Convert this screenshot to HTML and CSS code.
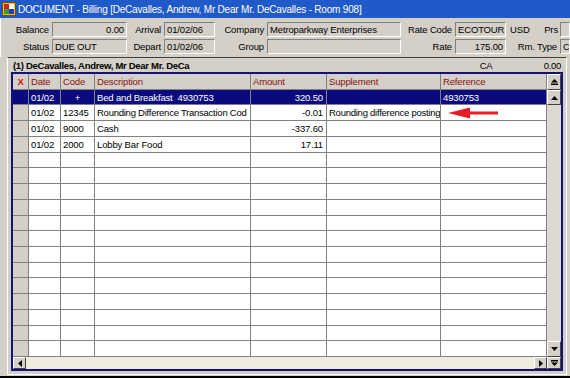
FILE: index.html
```html
<!DOCTYPE html>
<html lang="en">
<head>
  <meta charset="UTF-8">
  <title>DOCUMENT - Billing</title>
  <link rel="stylesheet" href="styles.css">
</head>
<body>
<div class="window">
  <div class="titlebar">
    <svg class="app-icon" width="14" height="14" viewBox="0 0 14 14">
      <rect x="0.5" y="0.5" width="13" height="13" fill="#f4c020" stroke="#7a4a00"/>
      <rect x="2" y="2" width="5" height="5" fill="#d42020"/>
      <rect x="7" y="7" width="5" height="5" fill="#2040c0"/>
      <rect x="7" y="2" width="5" height="5" fill="#fff"/>
      <rect x="2" y="7" width="5" height="5" fill="#30a030"/>
    </svg>
    <span class="title">DOCUMENT - Billing [DeCavalles, Andrew, Mr Dear Mr. DeCavalles - Room 908]</span>
  </div>

  <div class="summary">
    <label>Balance</label><div class="field num">0.00</div>
    <label>Arrival</label><div class="field">01/02/06</div>
    <label>Company</label><div class="field">Metroparkway Enterprises</div>
    <label>Rate Code</label><div class="field">ECOTOUR</div>
    <div class="pair"><span>USD</span><span>Prs</span></div><div class="field"></div>

    <label>Status</label><div class="field">DUE OUT</div>
    <label>Depart</label><div class="field">01/02/06</div>
    <label>Group</label><div class="field"></div>
    <label>Rate</label><div class="field num">175.00</div>
    <label>Rm. Type</label><div class="field">C</div>
  </div>

  <div class="panel">
    <div class="panel-head">
      <span class="guest">(1) DeCavalles, Andrew, Mr Dear Mr. DeCa</span>
      <span class="cur">CA</span>
      <span class="bal">0.00</span>
    </div>
    <div class="grid-box">
      <div class="grid-main">
        <div class="postings" id="postings">
          <div class="hd x">X</div><div class="hd">Date</div><div class="hd">Code</div><div class="hd">Description</div><div class="hd">Amount</div><div class="hd">Supplement</div><div class="hd">Reference</div>

          <div class="rh sel"></div><div class="sel">01/02</div><div class="sel center">+</div><div class="sel">Bed and Breakfast&nbsp; 4930753</div><div class="sel num">320.50</div><div class="sel"></div><div class="sel">4930753</div>

          <div class="rh"></div><div>01/02</div><div>12345</div><div class="tight">Rounding Difference Transaction Cod</div><div class="num">-0.01</div><div class="tight">Rounding difference posting</div><div></div>

          <div class="rh"></div><div>01/02</div><div>9000</div><div>Cash</div><div class="num">-337.60</div><div></div><div></div>

          <div class="rh"></div><div>01/02</div><div>2000</div><div>Lobby Bar Food</div><div class="num">17.11</div><div></div><div></div>
        </div>
        <div class="vscroll">
          <div class="sbtn"><svg width="7" height="6" viewBox="0 0 7 6"><path d="M3.5 0L7 3.5H0z" fill="#000"/><rect x="0" y="4.5" width="7" height="1.5" fill="#000"/></svg></div>
          <div class="sbtn"><svg width="7" height="4" viewBox="0 0 7 4"><path d="M3.5 0L7 4H0z" fill="#000"/></svg></div>
          <div class="track"></div>
          <div class="sbtn"><svg width="7" height="4" viewBox="0 0 7 4"><path d="M0 0H7L3.5 4z" fill="#000"/></svg></div>
        </div>
      </div>
      <div class="grid-foot">
        <div class="hscroll">
          <div class="sbtn h"><svg width="4" height="7" viewBox="0 0 4 7"><path d="M4 0V7L0 3.5z" fill="#000"/></svg></div>
          <div class="htrack"></div>
          <div class="sbtn h"><svg width="4" height="7" viewBox="0 0 4 7"><path d="M0 0V7L4 3.5z" fill="#000"/></svg></div>
        </div>
        <div class="sbtn corner"><svg width="7" height="6" viewBox="0 0 7 6"><rect x="0" y="0" width="7" height="1.5" fill="#000"/><path d="M0 2.5H7L3.5 6z" fill="#000"/></svg></div>
      </div>
    </div>
  </div>

  <svg class="pointer" width="52" height="14" viewBox="0 0 52 14">
    <path d="M1 7L23 1.5V5.5H51V8.5H23V12.5z" fill="#ec1c24"/>
  </svg>
</div>

<script>
  // fill the rest of the grid with empty rows
  const postings = document.getElementById('postings');
  for (let r = 0; r < 13; r++) {
    for (let c = 0; c < 7; c++) {
      const cell = document.createElement('div');
      if (c === 0) cell.className = 'rh';
      postings.appendChild(cell);
    }
  }
</script>
</body>
</html>
```

FILE: styles.css
```css
* {
  box-sizing: border-box;
}
html, body {
  margin: 0;
  padding: 0;
}
body {
  width: 570px;
  height: 378px;
  overflow: hidden;
  background: #d4d0c8;
  font-family: "Liberation Sans", Arial, sans-serif;
  font-size: 9.5px;
  letter-spacing: -0.15px;
  color: #000;
}
.window {
  position: relative;
  height: 378px;
  display: flex;
  flex-direction: column;
  border-bottom: 2px solid #000;
}
.titlebar {
  height: 18px;
  flex: none;
  background: #1f5ac8;
  color: #fff;
  display: flex;
  align-items: center;
  gap: 2px;
  padding-left: 2px;
  font-size: 10px;
  letter-spacing: -0.2px;
}
.app-icon {
  flex: none;
}

.summary {
  flex: none;
  display: grid;
  grid-template-columns: 51px 75px 37px 51px 52px 134px 54px 51px 54px 1fr;
  grid-template-rows: 15px 15px;
  row-gap: 2px;
  padding: 4px 0 3px;
  align-items: center;
  border-left: 1px solid #fff;
}
.summary label {
  text-align: right;
  padding-right: 3px;
  white-space: nowrap;
}
.pair {
  display: flex;
  justify-content: space-between;
  padding: 0 2px 0 4px;
}
.field {
  height: 15px;
  border: 1px solid;
  border-color: #808080 #fff #fff #808080;
  padding: 0 2px;
  line-height: 13px;
  white-space: nowrap;
  overflow: hidden;
}
.field.num {
  text-align: right;
}

.panel {
  flex: 1;
  margin: 0 3px 1px 7px;
  border: 1px solid;
  border-color: #404040 #fff #fff #fff;
  display: flex;
  flex-direction: column;
}
.panel-head {
  height: 14px;
  display: flex;
  align-items: center;
  padding: 0 5px 0 5px;
  font-weight: bold;
  letter-spacing: -0.3px;
}
.guest {
  flex: 1;
}
.cur {
  width: 64px;
  font-weight: normal;
}
.bal {
  font-weight: normal;
}

.grid-box {
  margin-left: 3px;
  width: 552px;
  border: 2px solid #14127a;
  background: #fff;
}
.grid-main {
  display: flex;
  height: 283px;
}
.postings {
  width: 534px;
  display: grid;
  grid-template-columns: 16px 32px 34px 156px 76px 114px 106px;
  grid-template-rows: repeat(18, 1fr);
}
.postings > div {
  border-right: 1px solid #808080;
  border-bottom: 1px solid #808080;
  padding: 0 2px;
  white-space: nowrap;
  overflow: hidden;
  display: flex;
  align-items: center;
}
.postings > .tight {
  letter-spacing: -0.25px;
}
.postings > .hd {
  background: #d4d0c8;
  color: #8a1010;
}
.postings > .x {
  color: #d01010;
  font-weight: bold;
  justify-content: center;
}
.postings > .rh {
  background: #d4d0c8;
}
.postings > .sel {
  background: #0a0a7e;
  color: #fff;
}
.postings > .num {
  justify-content: flex-end;
  padding-right: 3px;
}
.postings > .center {
  justify-content: center;
}

.vscroll {
  width: 14px;
  display: flex;
  flex-direction: column;
  background: #d4d0c8;
}
.vscroll .sbtn {
  height: 15.7px;
}
.track {
  flex: 1;
  background: #dcd9d2;
}
.sbtn {
  flex: none;
  display: flex;
  align-items: center;
  justify-content: center;
  background: #d4d0c8;
  border: 1px solid;
  border-color: #fff #404040 #404040 #fff;
}

.grid-foot {
  display: flex;
  height: 12px;
}
.hscroll {
  width: 534px;
  display: flex;
  background: #efebde;
}
.sbtn.h {
  width: 13px;
}
.htrack {
  flex: 1;
}
.sbtn.corner {
  width: 14px;
}

.pointer {
  position: absolute;
  left: 447px;
  top: 106px;
}
```
